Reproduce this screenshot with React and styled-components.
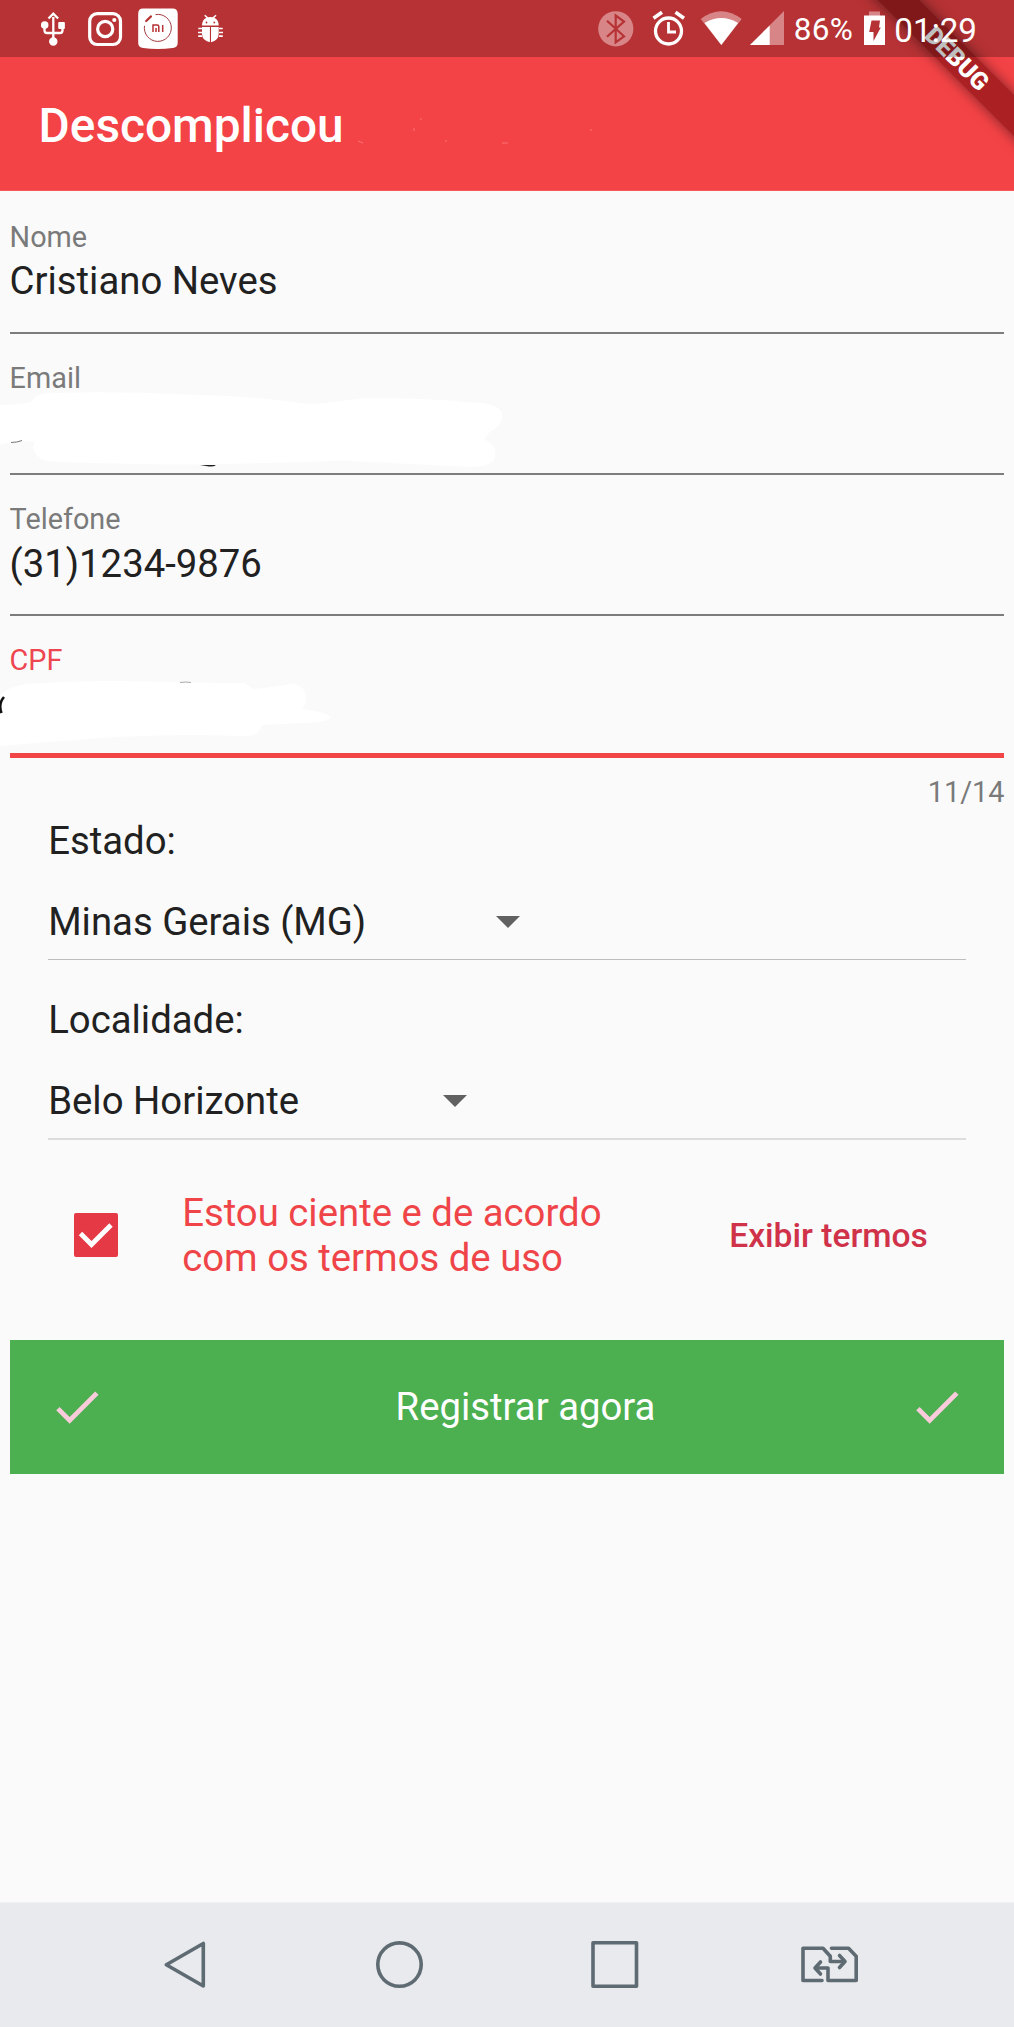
import React from 'react'
import styled, { createGlobalStyle } from 'styled-components';

const GlobalStyle = createGlobalStyle`
    * {
        box-sizing: border-box;
    }
    body {
        margin: 0;
        background-color: #fafafa;
        font-family: Roboto, "Liberation Sans", sans-serif;
    }
`

//styled Components
const Screen = styled.div`
    width: 1014px;
    height: 2027px;
    overflow: hidden;
    display: flex;
    flex-direction: column;
    color: #212121;
`
const Header = styled.header`
    position: relative;
    flex: none;
    overflow: hidden;
    background-color: #f44346;
`
//translucent, drawn over the debug banner
const StatusBar = styled.div`
    position: relative;
    z-index: 2;
    height: 57px;
    display: flex;
    justify-content: space-between;
    background-color: rgba(0, 0, 0, 0.25);
`
const StatusGroup = styled.div`
    display: flex;
    padding-right: 37px;
`
const BatteryText = styled.span`
    margin: 0 10px 0 9px;
    font-size: 31.5px;
    line-height: 60px;
    letter-spacing: 0.4px;
    color: #fff;
`
const Clock = styled.span`
    margin-left: 8px;
    font-size: 33.2px;
    line-height: 61px;
    color: #fff;
`
const AppBar = styled.div`
    position: relative;
    height: 134px;
    padding-left: 38.6px;
    border-bottom: 1px solid #f35a59;
`
const Title = styled.h1`
    margin: 0;
    font-size: 47.8px;
    font-weight: 500;
    line-height: 138px;
    color: #fff;
`
const Speckles = styled.svg`
    position: absolute;
    left: 330px;
    top: 33px;
`
const Banner = styled.div`
    position: absolute;
    z-index: 1;
    top: 43.5px;
    right: -103px;
    width: 320px;
    height: 29px;
    transform: rotate(45deg);
    background-color: #ab2022;
    box-shadow: 0 0 14px rgba(0, 0, 0, 0.5);
    color: #fff;
    font-size: 24.6px;
    font-weight: 900;
    line-height: 29px;
    text-align: center;
`
const Form = styled.main`
    flex: 1;
    display: flex;
    flex-direction: column;
    padding: 1.6px 9.6px 0;
`
const Field = styled.div`
    position: relative;
    height: ${props => props.$active ? 142 : 141.2}px;
    flex: none;
    display: flex;
    flex-direction: column;
    padding-top: 27.3px;
    border-bottom: ${props => props.$active ? '5px solid #f14548' : '2px solid #7c7c7c'};
`
const Label = styled.label`
    font-size: 28.8px;
    line-height: 34px;
    color: ${props => props.$active ? '#ee4650' : '#7a7a7a'};
`
const Value = styled.div`
    margin-top: 4.3px;
    font-size: 38.3px;
    line-height: 45.2px;
`
const Smudge = styled.svg`
    position: absolute;
    left: -9.6px;
    top: ${props => props.$top}px;
`
const Counter = styled.div`
    align-self: flex-end;
    margin-top: 16.6px;
    font-size: 28.8px;
    line-height: 34px;
    color: #7a7a7a;
`
const Selects = styled.div`
    padding: 0 38.6px;
`
const SelectLabel = styled.div`
    margin-top: ${props => props.$top}px;
    font-size: 38.3px;
    line-height: 45.2px;
`
const Select = styled.div`
    height: 95.6px;
    display: flex;
    justify-content: space-between;
    width: ${props => props.$width}px;
    padding-top: 35.8px;
    font-size: 38.3px;
    line-height: 45.2px;
`
const Arrow = styled.svg`
    margin-top: 17px;
`
const Divider = styled.div`
    height: ${props => props.$height}px;
    background-color: ${props => props.$color};
`
const Terms = styled.div`
    height: 200px;
    display: flex;
    align-items: center;
    padding-left: 64.6px;
    padding-bottom: 10px;
`
const Checkbox = styled.div`
    width: 44px;
    height: 44px;
    border-radius: 2px;
    background-color: #e53945;
    svg {
        display: block;
    }
`
const TermsText = styled.div`
    width: 547px;
    margin-left: 64px;
    font-size: 38.3px;
    line-height: 45.2px;
    color: #ef4549;
`
const TermsLink = styled.div`
    margin-top: 2px;
    font-size: 33.6px;
    font-weight: 500;
    line-height: 40px;
    color: #cf3249;
    white-space: nowrap;
`
const RegisterButton = styled.div`
    height: 134px;
    flex: none;
    display: flex;
    align-items: center;
    justify-content: space-between;
    padding: 0 38.6px;
    background-color: #4caf50;
`
const RegisterText = styled.span`
    padding-left: 37px;
    font-size: 38.3px;
    color: #fff;
`
const NavBar = styled.nav`
    height: 125px;
    flex: none;
    display: flex;
    background-color: #e8eaed;
    border-top: 1px solid #f0f1f2;
    svg {
        display: block;
    }
`

//Icons
const StatusIcons = () => (
    <svg width="230" height="57" viewBox="0 0 230 57" fill="none" stroke="#fff">
        {/* usb */}
        <g strokeWidth="2.3">
            <path d="M53.3 17v22M44.5 26v4.5q0 2.5 2.5 2.5h13q2.5 0 2.5-2.5V27M48.5 18.5l4.8-4.8 4.8 4.8" />
            <circle cx="44.7" cy="25" r="3" fill="#fff" strokeWidth="1.5" />
            <path d="M58.8 22.5h5.5v6h-5.5z" fill="#fff" strokeWidth="1" />
            <circle cx="53.3" cy="41.5" r="3.6" fill="#fff" strokeWidth="1.2" />
        </g>
        {/* instagram */}
        <rect x="89.7" y="13.7" width="30.8" height="30.8" rx="7.5" strokeWidth="3.2" />
        <circle cx="105.2" cy="29" r="7.6" strokeWidth="3.2" />
        <circle cx="114.3" cy="20" r="2.1" fill="#fff" stroke="none" />
        {/* mi fit */}
        <path d="M143 8.5h29.5q5.2 0 5.2 5.2v29q0 4.6-5 5.4-15.500 1.800-29.500 0-5-.8-5-5.400v-29q0-5.200 4.800-5.200z" fill="#fff" stroke="none" />
        <path d="M155.5 14.6a13.5 13.5 0 1 1-11 11.2" stroke="#a33c40" strokeWidth="1" />
        <path d="M146.2 21l4.8-4.6" stroke="#b73235" strokeWidth="2.2" strokeLinecap="round" />
        <path d="M153 32v-7h4.2q1.6 0 1.6 1.6V32M156 28v4M162.7 25v7" stroke="#b73235" strokeWidth="1.5" />
        {/* adb bug */}
        <g fill="#fff" stroke="none">
            <path d="M202 25.6q0-5.5 4.4-7.8l-2.2-2 1-1 2.8 2.5q2.3-.8 4.7 0l2.8-2.5 1 1-2.2 2q4.4 2.3 4.4 7.8z" />
            <path d="M202 27h7.9v15.2q-7.9-1.4-7.9-8.4zM211 27h7.7v6.8q0 7-7.7 8.4z" />
        </g>
        <path d="M202 28.5h-3.7M202 32.5h-4M202 36.2h-3.8M219 28.5h3.7M219 32.5h4M219 36.2h3.8" strokeWidth="1.7" />
        <circle cx="206.5" cy="22.5" r=".9" fill="#b73235" stroke="none" />
        <circle cx="214.3" cy="22.5" r=".9" fill="#b73235" stroke="none" />
    </svg>
)

const SystemIcons = () => (
    <svg width="190" height="57" viewBox="595 0 190 57" fill="none" stroke="#fff">
        {/* bluetooth */}
        <circle cx="615.8" cy="28.8" r="17.6" fill="#d88587" stroke="none" />
        <path d="M607 20.7l17 15.6-8.3 6V15.5l8.3 6L607 36.7" stroke="#b73235" strokeWidth="2.2" />
        {/* alarm */}
        <circle cx="668.5" cy="31" r="13" strokeWidth="3.3" />
        <path d="M668.5 22v10h7.5" strokeWidth="2.8" />
        <path d="M653.5 18.3l8.5-6M684 18.3l-8.5-6" strokeWidth="3.6" />
        {/* wifi */}
        <path d="M700.7 19q20.5-15.5 41 0L721.3 45z" fill="#d88587" stroke="none" />
        <path d="M704.5 23q16.8-10 33.6 0L721.3 45z" fill="#fff" stroke="none" />
        {/* signal */}
        <path d="M784 11v34h-34z" fill="#d88587" stroke="none" />
        <path d="M769.7 25.5V45H750z" fill="#fff" stroke="none" />
    </svg>
)

const BatteryIcon = () => (
    <svg width="23" height="57" viewBox="0 0 23 57">
        <path d="M6 11.5h11V16H6z" fill="#d88587" />
        <path d="M1 15.5h21V45H1z" fill="#fff" />
        <path d="M8.5 20.5H17l-1 7h1.8L10.5 41v-9H6.2z" fill="#b73235" />
    </svg>
)

const CheckIcon = () => (
    <svg width="57.8" height="57.8" viewBox="0 0 24 24" fill="#f9cbdb">
        <path d="M9 16.17L4.83 12l-1.42 1.41L9 19 21 7l-1.41-1.41z" />
    </svg>
)

const DropdownArrow = () => (
    <Arrow width="24" height="13" viewBox="0 0 24 13" fill="#616161">
        <path d="M0 0h24L12 12z" />
    </Arrow>
)

const NavIcons = () => (
    <svg width="1014" height="124" viewBox="0 1903 1014 124" fill="none" stroke="#5f6b73" strokeWidth="3.6" strokeLinejoin="round">
        <path d="M203.3 1943.5v42.5l-37-21.3z" />
        <circle cx="399.5" cy="1964.6" r="21.7" />
        <rect x="593" y="1942.8" width="43.5" height="43.5" />
        <path d="M822 1980.5H803v-32.2h20l7.3 8v5.2h14M831.5 1948.3h17l7.7 8v24.2H828v-12.5h-12" strokeLinecap="round" />
        <path d="M839.5 1955.5l5.5 6-5.5 6M820.5 1962l-5.5 6 5.5 6" strokeLinecap="round" />
    </svg>
)

const App = () => {
  return (
    <>
        <GlobalStyle />
        <Screen>
            <Header>
                <StatusBar>
                    <StatusIcons />
                    <StatusGroup>
                        <SystemIcons />
                        <BatteryText>86%</BatteryText>
                        <BatteryIcon />
                        <Clock>01:29</Clock>
                    </StatusGroup>
                </StatusBar>
                <AppBar>
                    <Title>Descomplicou</Title>
                    <Speckles width="320" height="70" stroke="#fa7375" fill="none">
                        <path d="M28 51l5 2M84 38v3M115 51h2M172 53h6M260 40h2M90 29h2" />
                    </Speckles>
                </AppBar>
                <Banner>DEBUG</Banner>
            </Header>
            <Form>
                <Field>
                    <Label>Nome</Label>
                    <Value>Cristiano Neves</Value>
                </Field>
                <Field>
                    <Label>Email</Label>
                    <Smudge $top={57} width="510" height="82" viewBox="0 390 510 82">
                        <path d="M0 404q20 0 32-3 2-9 22-9 60-2 130 1.5 70 1 126 10 30-3 50-6 60-1 110 4 28 0 32 11 2 12-12 18l-6 8q14 5 11 18-4 11-34 9l-120-6q-100 4-170 4-80-1-120-3-14-1-18-14l2-6q-16-1-35 3z" fill="#fff" />
                        <path d="M11 441.500q6 0 11-2" stroke="#777" strokeWidth="1" fill="none" />
                        <path d="M200 464h16q-2 2-7 1.500z" fill="#222" />
                    </Smudge>
                </Field>
                <Field>
                    <Label>Telefone</Label>
                    <Value>(31)1234-9876</Value>
                </Field>
                <Field $active>
                    <Label $active>CPF</Label>
                    <Smudge $top={63} width="340" height="70" viewBox="0 679 340 70">
                        <path d="M0 696q8-10 28-12 60-5 140-2 40 1 76 1l10 6q20-2 36-5 16 0 16 15 0 6-4 10l22 4q8 4 6 5-6 5-30 5l-38 2q-2 12-22 11-70-3-155 3l-85 7z" fill="#fff" />
                        <path d="M4 697q-6 7-2.5 16" stroke="#111" strokeWidth="2.6" fill="none" />
                        <path d="M180 682.5q6-1 11 0" stroke="#aaa" strokeWidth="1" fill="none" />
                    </Smudge>
                </Field>
                <Counter>11/14</Counter>
                <Selects>
                    <SelectLabel $top={9.2}>Estado:</SelectLabel>
                    <Select $width={471.5}>
                        Minas Gerais (MG)
                        <DropdownArrow />
                    </Select>
                    <Divider $height={1} $color="#bdbdbd" />
                    <SelectLabel $top={37.4}>Localidade:</SelectLabel>
                    <Select $width={419}>
                        Belo Horizonte
                        <DropdownArrow />
                    </Select>
                    <Divider $height={2} $color="#dcdcdc" />
                </Selects>
                <Terms>
                    <Checkbox>
                        <svg width="44" height="44" viewBox="0 0 44 44" fill="none">
                            <path d="M6.5 20.5l11 11L37 12" stroke="#fff" strokeWidth="4.8" />
                        </svg>
                    </Checkbox>
                    <TermsText>Estou ciente e de acordo<br />com os termos de uso</TermsText>
                    <TermsLink>Exibir termos</TermsLink>
                </Terms>
                <RegisterButton>
                    <CheckIcon />
                    <RegisterText>Registrar agora</RegisterText>
                    <CheckIcon />
                </RegisterButton>
            </Form>
            <NavBar>
                <NavIcons />
            </NavBar>
        </Screen>
    </>
  )
}

export default App
